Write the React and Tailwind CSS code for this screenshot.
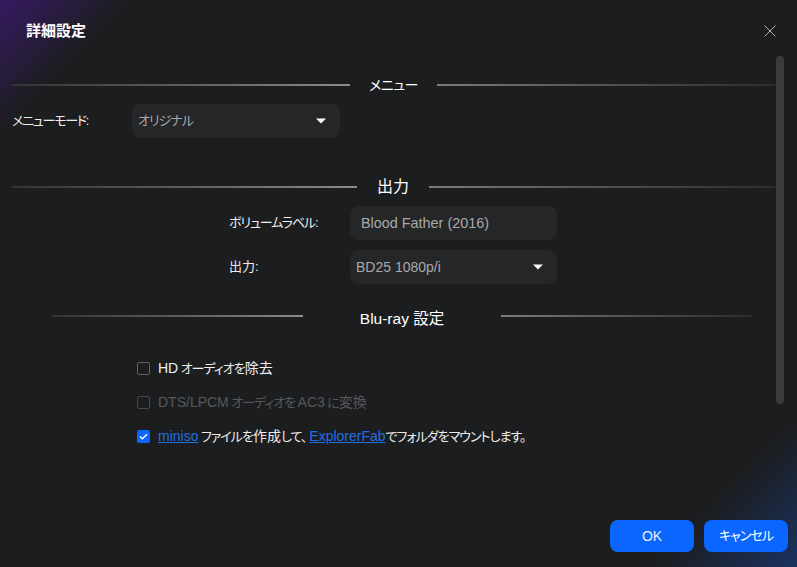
function Divider({ label, leftW, rightW, gap, className = "text-sm" }) {
  return (
    <div className="flex items-center">
      <div className="h-[2px] bg-gradient-to-r from-[#333436] to-[#8a8b8d]" style={{ width: leftW }} />
      <div className={`text-center text-white ${className}`} style={{ width: gap }}>{label}</div>
      <div className="h-[2px] bg-gradient-to-r from-[#7a7b7d] to-[#2c2d2f]" style={{ width: rightW }} />
    </div>
  );
}

function Caret() {
  return (
    <svg width="10" height="6" viewBox="0 0 10 6" className="shrink-0">
      <path d="M0 0.5h10L5 5.5z" fill="#fff" />
    </svg>
  );
}

function Select({ className, children }) {
  return (
    <div className={`flex h-[34px] items-center justify-between rounded-lg bg-[#252628] text-[#a8a9ab] ${className}`}>
      {children}
      <Caret />
    </div>
  );
}

// kana in the original UI font runs narrower than Noto, so squeeze it
function Kana({ children }) {
  return <span className="text-[13px] tracking-[-1px]">{children}</span>;
}

function CheckRow({ checked, dim, children }) {
  return (
    <div className={`flex h-[34px] items-center text-sm [word-spacing:-1.5px] ${dim ? "text-[#57585a]" : "text-[#eeeeee]"}`}>
      {checked ? (
        <span className="mr-2 flex h-[13px] w-[13px] items-center justify-center rounded-[2px] bg-[#0a66ff]">
          <svg width="9" height="7" viewBox="0 0 9 7">
            <path d="M1 3.5l2.4 2.3L8 1.2" fill="none" stroke="#fff" strokeWidth="1.5" />
          </svg>
        </span>
      ) : (
        <span className={`mr-2 h-[13px] w-[13px] rounded-[2px] border ${dim ? "border-[#48494b]" : "border-[#606163]"}`} />
      )}
      <span>{children}</span>
    </div>
  );
}

export default function App() {
  return (
    <div
      className="relative h-[567px] w-[797px] overflow-hidden bg-[#1c1d1f] bg-[linear-gradient(135deg,#351a62_0,transparent_95px),linear-gradient(315deg,#1a3260_0,transparent_105px)] text-white [font-feature-settings:'palt']"
      style={{ fontFamily: '"Liberation Sans", "Noto Sans CJK JP", sans-serif' }}
    >
      <div className="flex h-[66px] items-start justify-between pl-[26px] pr-[21px] pt-[21px]">
        <h1 className="text-[15px] font-bold leading-5">詳細設定</h1>
        <svg width="12" height="12" viewBox="0 0 12 12" className="mt-[4px]">
          <path d="M0.5 0.5l11 11M11.5 0.5l-11 11" stroke="#b0b1b3" strokeWidth="1" />
        </svg>
      </div>

      <section className="pl-3">
        <div className="flex h-[38px] items-center">
          <Divider label="メニュー" leftW={338} gap={87} rightW={338} className="text-sm tracking-[-0.5px]" />
        </div>
        <div className="flex items-center">
          <label className="w-[120px] text-[13px] tracking-[-1.25px] text-[#eeeeee]">メニューモード:</label>
          <Select className="w-[208px] pl-[6px] pr-[14px] text-[13px]">
            <span className="tracking-[-1px]">オリジナル</span>
          </Select>
        </div>
      </section>

      <section className="mt-[30px] pl-3">
        <div className="flex h-[38px] items-center">
          <Divider label="出力" leftW={345} gap={72} rightW={346} className="text-base" />
        </div>
        <div className="pl-[217px]">
          <div className="flex items-center">
            <label className="w-[121px] text-[13px] tracking-[-1.1px] text-[#eeeeee]">ボリュームラベル:</label>
            <div className="flex h-[34px] w-[207px] items-center rounded-lg bg-[#252628] pl-[11px] pt-[2px] text-[14.4px] text-[#a8a9ab]">Blood Father (2016)</div>
          </div>
          <div className="mt-[10px] flex items-center">
            <label className="w-[121px] text-[13px] text-[#eeeeee]">出力:</label>
            <Select className="w-[207px] pl-[6px] pr-[14px] text-sm">
              <span>BD25 1080p/i</span>
            </Select>
          </div>
        </div>
      </section>

      <section className="mt-[13px] pl-[52px]">
        <div className="flex h-[38px] items-center">
          <Divider label="Blu-ray 設定" leftW={251} gap={198} rightW={251} className="pt-[5px] text-[15.5px]" />
        </div>
        <div className="mt-4 pl-[85px]">
          <CheckRow>HD <Kana>オーディオを</Kana>除去</CheckRow>
          <CheckRow dim>DTS/LPCM <Kana>オーディオを</Kana> AC3 <Kana>に</Kana>変換</CheckRow>
          <CheckRow checked>
            <a className="text-[#1f6fe5] underline">miniso</a> <Kana>ファイルを</Kana>作成<Kana>して、</Kana><a className="ml-[3px] text-[#1f6fe5] underline">ExplorerFab</a><Kana>でフォルダをマウントします。</Kana>
          </CheckRow>
        </div>
      </section>

      <div className="absolute right-[13px] top-[56px] h-[348px] w-2 rounded-full bg-[#3a3b3d]" />

      <div className="absolute bottom-[15px] right-[9px] flex gap-[10px]">
        <button className="h-[32px] w-[84px] rounded-lg bg-[#0a66ff] text-sm text-[#e8f0ff]">OK</button>
        <button className="h-[32px] w-[84px] rounded-lg bg-[#0a66ff] text-[13px] tracking-[-1px] text-white">キャンセル</button>
      </div>
    </div>
  );
}
